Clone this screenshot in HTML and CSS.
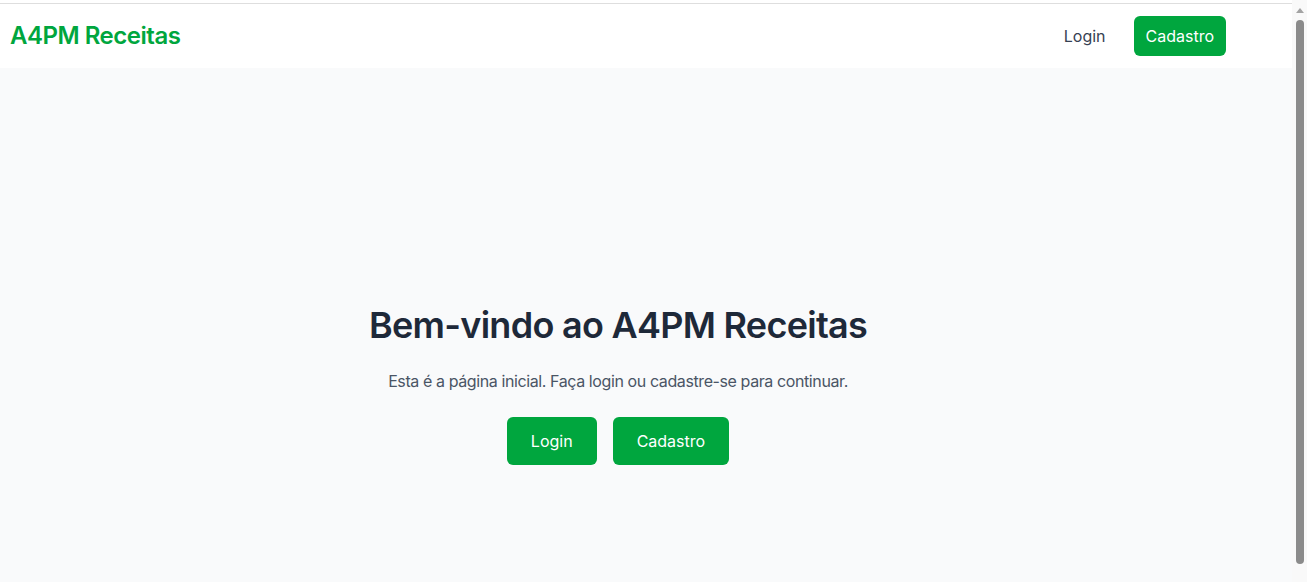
FILE: index.html
```html
<!DOCTYPE html>
<html lang="pt-BR">
<head>
<meta charset="utf-8">
<title>A4PM Receitas</title>
<link rel="stylesheet" href="styles.css">
</head>
<body>
<div class="topline"></div>
<header class="header">
  <div class="container header-inner">
    <a class="logo" href="#">A4PM Receitas</a>
    <nav class="nav">
      <a class="nav-link" href="#">Login</a>
      <a class="btn btn-sm" href="#">Cadastro</a>
    </nav>
  </div>
</header>
<main class="main">
  <div class="container hero">
    <h1 class="title">Bem-vindo ao A4PM Receitas</h1>
    <p class="lead">Esta é a página inicial. Faça login ou cadastre-se para continuar.</p>
    <div class="actions">
      <a class="btn btn-lg" href="#">Login</a>
      <a class="btn btn-lg" href="#">Cadastro</a>
    </div>
  </div>
</main>
<div class="scrollbar" aria-hidden="true">
  <div class="scroll-arrow"></div>
  <div class="scroll-thumb"></div>
</div>
</body>
</html>
```
FILE: styles.css
```css
* { box-sizing: border-box; }
html, body { margin: 0; padding: 0; }
body {
  font-family: Inter, "Noto Sans", sans-serif;
  background: #f9fafb;
  color: #1e2939;
  letter-spacing: -0.025em;
}
a { text-decoration: none; }
.topline {
  height: 4px;
  background: #ffffff;
  border-bottom: 1px solid #dedede;
}
.header {
  background: #ffffff;
  height: 64px;
}
.container {
  width: 1236px;
  padding: 0 10px;
}
.header-inner {
  height: 100%;
  display: flex;
  align-items: center;
  justify-content: space-between;
}
.logo {
  color: #00a63e;
  font-size: 24px;
  font-weight: 600;
  line-height: 32px;
  letter-spacing: -0.02em;
}
.nav {
  display: flex;
  align-items: center;
  gap: 16px;
}
.nav-link {
  color: #364153;
  font-size: 16px;
  line-height: 24px;
  padding: 8px 12px;
  letter-spacing: normal;
}
.btn {
  background: #00a63e;
  color: #ffffff;
  font-size: 16px;
  line-height: 24px;
  border-radius: 6px;
  font-weight: 400;
  letter-spacing: normal;
}
.btn-sm { padding: 8px 12px; }
.btn-lg { padding: 12px 24px; }
.main {
  min-height: 530px;
  padding-top: 237px;
}
.hero {
  display: flex;
  flex-direction: column;
  align-items: center;
  text-align: center;
}
.title {
  margin: 0 0 24px;
  font-size: 36px;
  line-height: 40px;
  font-weight: 600;
  color: #1e2939;
  letter-spacing: -0.02em;
}
.lead {
  margin: 0 0 24px;
  font-size: 16px;
  line-height: 24px;
  color: #4a5565;
}
.actions {
  display: flex;
  gap: 16px;
}
.scrollbar {
  position: fixed;
  top: 0;
  right: 0;
  bottom: 0;
  width: 15px;
  background: #f9f9f9;
}
.scroll-arrow {
  position: absolute;
  top: 8px;
  left: 4px;
  width: 0;
  height: 0;
  border-left: 4px solid transparent;
  border-right: 4px solid transparent;
  border-bottom: 5px solid #a3a3a3;
}
.scroll-thumb {
  position: absolute;
  top: 20px;
  left: 4px;
  width: 8px;
  height: 544px;
  border-radius: 4px;
  background: #8b8b8b;
}
```
